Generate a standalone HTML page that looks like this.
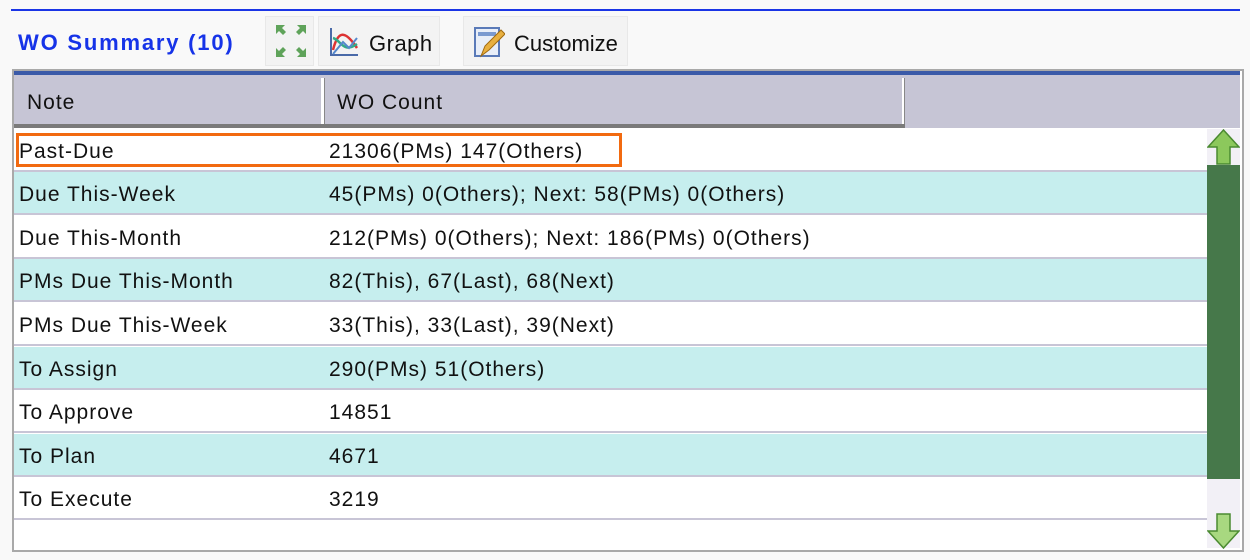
<!DOCTYPE html>
<html><head><style>
body{margin:0;width:1250px;height:560px;background:#f9f9f9;font-family:"Liberation Sans",sans-serif;position:relative;overflow:hidden}
.a{position:absolute}
.btn{position:absolute;top:16px;height:50px;background:#f3f3f3;border:1px solid #e8e8e8;box-sizing:border-box}
.row{position:absolute;left:14px;width:1193px;height:43px;font-size:21px;letter-spacing:1px;color:#111;border-bottom:2px solid #c8c5d6;box-sizing:border-box}
.row span{position:absolute;top:11px}
.row .n{left:5px}.row .c{left:315px}
</style></head><body>
<div class="a" style="left:11px;top:9px;width:1229px;height:2px;background:#1a35e6"></div>
<div class="a" style="left:18px;top:30px;font-size:22px;font-weight:bold;letter-spacing:1.8px;color:#1633e8">WO Summary (10)</div>
<div class="btn" style="left:265px;width:49px"></div>
<svg class="a" style="left:275px;top:24px" width="32" height="34" viewBox="0 0 32 34">
<g fill="#5fa35a"><path d="M1 1h9l-3 3 4 4-3 3-4-4-3 3z"/><path d="M31 1h-9l3 3-4 4 3 3 4-4 3 3z"/><path d="M1 33h9l-3-3 4-4-3-3-4 4-3-3z"/><path d="M31 33h-9l3-3-4-4 3-3 4 4 3-3z"/></g></svg>
<div class="btn" style="left:318px;width:122px"></div>
<svg class="a" style="left:328px;top:26px" width="32" height="32" viewBox="0 0 32 32">
<path d="M3 2v27h27" stroke="#4a6aa8" stroke-width="2" fill="none"/>
<path d="M5 24c5-20 12-20 24-2" stroke="#d33" stroke-width="2.5" fill="none"/>
<path d="M5 12c8 2 10 16 24 6" stroke="#3a8" stroke-width="2.5" fill="none"/>
<path d="M5 28l10-12 6 6 8-10" stroke="#58c" stroke-width="2" fill="none"/></svg>
<div class="a" style="left:369px;top:31px;font-size:22px;letter-spacing:0.5px;color:#111">Graph</div>
<div class="btn" style="left:463px;width:165px"></div>
<svg class="a" style="left:473px;top:26px" width="32" height="34" viewBox="0 0 32 34">
<rect x="2" y="2" width="24" height="28" fill="#e8eef8" stroke="#5a7ab8" stroke-width="2"/>
<rect x="5" y="6" width="18" height="4" fill="#7a9ad0"/>
<path d="M8 30l4-10 16-16 4 4-16 16z" fill="#e8b040" stroke="#a06a10"/></svg>
<div class="a" style="left:514px;top:31px;font-size:22px;color:#111">Customize</div>
<div class="a" style="left:12px;top:69px;width:1228px;height:479px;border:2px solid #a9a9a9;background:#fff"></div>
<div class="a" style="left:14px;top:71px;width:1226px;height:4px;background:#3a5aa8"></div>
<div class="a" style="left:14px;top:75px;width:1226px;height:53px;background:#c6c5d5"></div>
<div class="a" style="left:14px;top:124px;width:891px;height:4px;background:#7a7a7a"></div>
<div class="a" style="left:321px;top:78px;width:3px;height:46px;background:#fff;border-right:1px solid #888"></div>
<div class="a" style="left:902px;top:78px;width:2px;height:46px;background:#fff;border-right:1px solid #888"></div>
<div class="a" style="left:27px;top:91px;font-size:21px;letter-spacing:1px;color:#111">Note</div>
<div class="a" style="left:337px;top:91px;font-size:21px;letter-spacing:1px;color:#111">WO Count</div>

<div class="row" style="top:129px;background:#fff"><span class="n">Past-Due</span><span class="c">21306(PMs) 147(Others)</span></div>
<div class="row" style="top:172px;background:#c6eeee"><span class="n">Due This-Week</span><span class="c">45(PMs) 0(Others); Next: 58(PMs) 0(Others)</span></div>
<div class="row" style="top:216px;background:#fff"><span class="n">Due This-Month</span><span class="c">212(PMs) 0(Others); Next: 186(PMs) 0(Others)</span></div>
<div class="row" style="top:259px;background:#c6eeee"><span class="n">PMs Due This-Month</span><span class="c">82(This), 67(Last), 68(Next)</span></div>
<div class="row" style="top:303px;background:#fff"><span class="n">PMs Due This-Week</span><span class="c">33(This), 33(Last), 39(Next)</span></div>
<div class="row" style="top:347px;background:#c6eeee"><span class="n">To Assign</span><span class="c">290(PMs) 51(Others)</span></div>
<div class="row" style="top:390px;background:#fff"><span class="n">To Approve</span><span class="c">14851</span></div>
<div class="row" style="top:434px;background:#c6eeee"><span class="n">To Plan</span><span class="c">4671</span></div>
<div class="row" style="top:477px;background:#fff"><span class="n">To Execute</span><span class="c">3219</span></div>
<div class="a" style="left:16px;top:133px;width:600px;height:28px;border:3px solid #f26a10"></div>

<div class="a" style="left:1207px;top:129px;width:33px;height:419px;background:#f2f0f6"></div>
<div class="a" style="left:1207px;top:165px;width:33px;height:314px;background:#46784a"></div>
<svg class="a" style="left:1207px;top:129px" width="33" height="36" viewBox="0 0 33 36"><path d="M16.5 1L32 18h-9v17H10V18H1z" fill="#8cc85c" stroke="#4a8a30" stroke-width="1.5"/></svg>
<svg class="a" style="left:1207px;top:513px" width="33" height="36" viewBox="0 0 33 36"><path d="M16.5 35L32 18h-9V1H10v17H1z" fill="#a8d880" stroke="#4a8a30" stroke-width="1.5"/></svg>
</body></html>
